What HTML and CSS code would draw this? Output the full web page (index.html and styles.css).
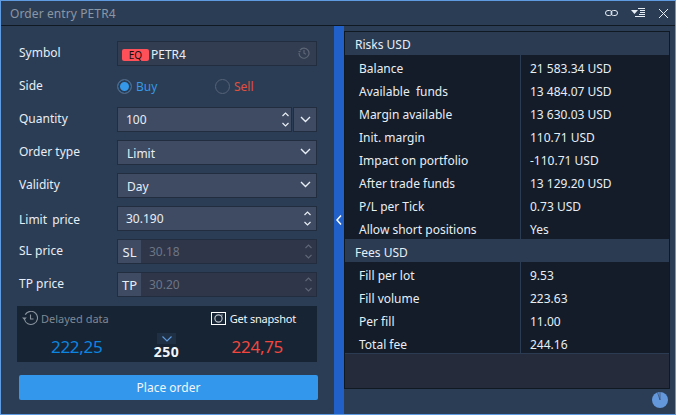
FILE: index.html
```html
<!DOCTYPE html>
<html lang="en">
<head>
    <meta charset="UTF-8">
    <title>Order entry PETR4</title>
    <link rel="stylesheet" href="styles.css">
</head>
<body>
<div class="window">
    <!-- Title bar -->
    <div class="titlebar">
        <span class="title">Order entry PETR4</span>
        <div class="titleIcons">
            <svg width="13" height="8" viewBox="0 0 13 8" fill="none" stroke="#e8eef5" stroke-width="1"><rect x="0.5" y="1.5" width="6.5" height="5" rx="2.5"/><rect x="6" y="1.5" width="6.5" height="5" rx="2.5"/></svg>
            <svg width="14" height="10" viewBox="0 0 14 10" fill="#e8eef5"><path d="M0 2h7L3.5 6z"/><rect x="7" y="0" width="7" height="1"/><rect x="9" y="2" width="5" height="1"/><rect x="9" y="4" width="5" height="1"/><rect x="8" y="6" width="6" height="1"/><rect x="4" y="8" width="10" height="1"/></svg>
            <svg width="11" height="11" viewBox="0 0 11 11" stroke="#e8eef5" stroke-width="1"><path d="M1 1l9 9M10 1l-9 9"/></svg>
        </div>
    </div>

    <div class="content">
        <!-- Order form -->
        <div class="orderForm">
            <div class="formRow">
                <label>Symbol</label>
                <div class="field symbolField">
                    <span class="eqBadge">EQ</span>
                    <span class="symbolName">PETR4</span>
                    <svg class="historyIcon" width="12" height="12" viewBox="0 0 12 12" fill="none" stroke="#5d6675" stroke-width="1.2"><path d="M2 3.2A5 5 0 1 1 1 6"/><path d="M6 3v3.2l2 1"/><path d="M0 4l1.6 1.6L3 4z" fill="#5d6675" stroke="none"/></svg>
                </div>
            </div>
            <div class="formRow">
                <label>Side</label>
                <div class="sideOptions">
                    <div class="radioOption">
                        <span class="radio radioChecked"></span><span class="buyText">Buy</span>
                    </div>
                    <div class="radioOption">
                        <span class="radio"></span><span class="sellText">Sell</span>
                    </div>
                </div>
            </div>
            <div class="formRow">
                <label>Quantity</label>
                <div class="fieldGroup">
                    <div class="field inputField qtyField">
                        <span class="value">100</span>
                        <svg class="spinner" width="7" height="15" viewBox="0 0 7 15" fill="none" stroke="#e8eef5" stroke-width="1.2"><path d="M0.5 4l3-3 3 3M0.5 11l3 3 3-3"/></svg>
                    </div>
                    <div class="field qtyDrop">
                        <svg width="11" height="7" viewBox="0 0 11 7" fill="none" stroke="#e8eef5" stroke-width="1.4"><path d="M1 1l4.5 4.5L10 1"/></svg>
                    </div>
                </div>
            </div>
            <div class="formRow">
                <label>Order type</label>
                <div class="field inputField">
                    <span class="value selectValue">Limit</span>
                    <svg class="chevron" width="11" height="7" viewBox="0 0 11 7" fill="none" stroke="#e8eef5" stroke-width="1.4"><path d="M1 1l4.5 4.5L10 1"/></svg>
                </div>
            </div>
            <div class="formRow">
                <label>Validity</label>
                <div class="field inputField">
                    <span class="value selectValue">Day</span>
                    <svg class="chevron" width="11" height="7" viewBox="0 0 11 7" fill="none" stroke="#e8eef5" stroke-width="1.4"><path d="M1 1l4.5 4.5L10 1"/></svg>
                </div>
            </div>
            <div class="formRow">
                <label class="limitLabel">Limit price</label>
                <div class="field inputField">
                    <span class="value">30.190</span>
                    <svg class="spinner" width="7" height="15" viewBox="0 0 7 15" fill="none" stroke="#e8eef5" stroke-width="1.2"><path d="M0.5 4l3-3 3 3M0.5 11l3 3 3-3"/></svg>
                </div>
            </div>
            <div class="formRow">
                <label>SL price</label>
                <div class="field disabledField">
                    <span class="prefix">SL</span>
                    <span class="value mutedValue">30.18</span>
                    <svg class="spinner" width="7" height="15" viewBox="0 0 7 15" fill="none" stroke="#5d6675" stroke-width="1.2"><path d="M0.5 4l3-3 3 3M0.5 11l3 3 3-3"/></svg>
                </div>
            </div>
            <div class="formRow">
                <label>TP price</label>
                <div class="field disabledField">
                    <span class="prefix">TP</span>
                    <span class="value mutedValue">30.20</span>
                    <svg class="spinner" width="7" height="15" viewBox="0 0 7 15" fill="none" stroke="#5d6675" stroke-width="1.2"><path d="M0.5 4l3-3 3 3M0.5 11l3 3 3-3"/></svg>
                </div>
            </div>

            <!-- Quote panel -->
            <div class="quotePanel">
                <div class="quoteTop">
                    <div class="delayed">
                        <svg width="16" height="15" viewBox="0 0 16 15" fill="none" stroke="#8a939e" stroke-width="1.1"><path d="M3.2 3.6A6.6 6.6 0 1 1 2.4 8"/><path d="M8.5 3.5v4.5h3"/><path d="M0 6.5l2.4 2.4 2.4-2.4z" fill="#8a939e" stroke="none"/></svg>
                        <span>Delayed data</span>
                    </div>
                    <div class="snapshot">
                        <svg width="15" height="13" viewBox="0 0 15 13" fill="none"><rect x="0.5" y="0.5" width="14" height="12" stroke="#fff"/><circle cx="7.5" cy="6.5" r="3.6" stroke="#b9c0c8" stroke-width="1.2"/><path d="M11 2.5v1" stroke="#fff"/></svg>
                        <span>Get snapshot</span>
                    </div>
                </div>
                <div class="quoteBottom">
                    <span class="bid">222,25</span>
                    <div class="spread">
                        <span class="spreadToggle">
                            <svg width="10" height="6" viewBox="0 0 10 6" fill="none" stroke="#5f9be0" stroke-width="1.1"><path d="M0.5 0.5L5 5l4.5-4.5"/></svg>
                        </span>
                        <span class="spreadValue">250</span>
                    </div>
                    <span class="ask">224,75</span>
                </div>
            </div>

            <button class="placeOrder" type="button">Place order</button>
        </div>

        <!-- Splitter -->
        <div class="splitter">
            <svg width="6" height="10" viewBox="0 0 6 10" fill="none" stroke="#fff" stroke-width="1.5"><path d="M5 0.5L1 5l4 4.5"/></svg>
        </div>

        <!-- Risks and fees -->
        <div class="sidePane">
            <div class="infoBox">
                <div class="infoHeader">Risks USD</div>
                <div class="infoRow"><span class="infoName">Balance</span><span class="infoValue">21 583.34 USD</span></div>
                <div class="infoRow"><span class="infoName">Available&nbsp; funds</span><span class="infoValue">13 484.07 USD</span></div>
                <div class="infoRow"><span class="infoName">Margin available</span><span class="infoValue">13 630.03 USD</span></div>
                <div class="infoRow"><span class="infoName">Init. margin</span><span class="infoValue">110.71 USD</span></div>
                <div class="infoRow"><span class="infoName">Impact on portfolio</span><span class="infoValue">-110.71 USD</span></div>
                <div class="infoRow"><span class="infoName">After trade funds</span><span class="infoValue">13 129.20 USD</span></div>
                <div class="infoRow"><span class="infoName">P/L per Tick</span><span class="infoValue">0.73 USD</span></div>
                <div class="infoRow"><span class="infoName">Allow short positions</span><span class="infoValue">Yes</span></div>
                <div class="infoHeader feesHeader">Fees USD</div>
                <div class="infoRow"><span class="infoName">Fill per lot</span><span class="infoValue">9.53</span></div>
                <div class="infoRow"><span class="infoName">Fill volume</span><span class="infoValue">223.63</span></div>
                <div class="infoRow"><span class="infoName">Per fill</span><span class="infoValue">11.00</span></div>
                <div class="infoRow"><span class="infoName">Total fee</span><span class="infoValue">244.16</span></div>
                <div class="infoFooter"></div>
            </div>
            <div class="statusBar">
                <svg width="16" height="16" viewBox="0 0 16 16"><circle cx="8" cy="8" r="8" fill="#6398dc"/><path d="M8 8V0" stroke="#2b3d55" stroke-width="0.6"/><path d="M8 8L5.5 0.4" stroke="#2b3d55" stroke-width="0.6"/></svg>
            </div>
        </div>
    </div>
</div>
</body>
</html>
```

FILE: styles.css
```css
* {
    box-sizing: border-box;
}

body {
    margin: 0;
    font-family: "Noto Sans", sans-serif;
    font-size: 12px;
    color: #e8eef5;
    background-color: #2b3d55;
}

.window {
    width: 676px;
    height: 415px;
    border: 1px solid #5f9be0;
    display: flex;
    flex-direction: column;
    background-color: #2b3d55;
    overflow: hidden;
}

/* Title bar */
.titlebar {
    height: 25px;
    flex-shrink: 0;
    display: flex;
    align-items: center;
    justify-content: space-between;
    padding: 0 6px 0 9px;
    border-bottom: 1px solid #101822;
}

.title {
    color: #8c96a3;
    font-size: 12px;
    letter-spacing: 0.1px;
}

.titleIcons {
    display: flex;
    align-items: center;
    gap: 13px;
}

.content {
    flex: 1;
    display: flex;
    min-height: 0;
}

/* Order form */
.orderForm {
    width: 333px;
    flex-shrink: 0;
    padding: 15px 17px 0 18px;
    display: flex;
    flex-direction: column;
}

.formRow {
    height: 25px;
    margin-bottom: 8px;
    display: flex;
    align-items: center;
}

.formRow label {
    width: 98px;
    flex-shrink: 0;
    color: #e8eef5;
    margin-top: -2px;
}

.formRow .limitLabel {
    margin-top: 2px;
    word-spacing: 2px;
}

.field {
    flex: 1;
    height: 25px;
    display: flex;
    align-items: center;
    border: 1px solid #222e40;
}

.inputField {
    background-color: #3f4b63;
    padding: 0 5px 0 8px;
    justify-content: space-between;
}

.qtyField {
    padding-right: 2px;
}

.symbolField {
    background-color: #323d52;
    padding: 2px 3px 0 4px;
}

.eqBadge {
    width: 27px;
    height: 12px;
    line-height: 12px;
    text-align: center;
    font-size: 10px;
    color: #111;
    background-color: #fd5059;
    border-radius: 2px;
}

.symbolName {
    margin-left: 2px;
}

.historyIcon {
    margin-left: auto;
    margin-right: 3px;
    margin-top: -4px;
}

.value {
    font-size: 12px;
}

.selectValue {
    margin-left: 1px;
    padding-top: 2px;
}

.chevron {
    margin-top: -3px;
}

.sideOptions {
    display: flex;
}

.radioOption {
    width: 98px;
    display: flex;
    align-items: center;
    gap: 4px;
}

.radio {
    width: 15px;
    height: 15px;
    border-radius: 50%;
    border: 1px solid #566378;
    display: inline-block;
}

.radioChecked {
    background-color: #3598e8;
    box-shadow: inset 0 0 0 2px #2b3d55;
}

.buyText {
    color: #3598e8;
}

.sellText {
    color: #e0503f;
}

.fieldGroup {
    flex: 1;
    display: flex;
    gap: 1px;
}

.qtyDrop {
    flex: 0 0 24px;
    justify-content: center;
    background-color: #3f4b63;
}

.disabledField {
    background-color: #2f3649;
    padding-right: 4px;
}

.prefix {
    width: 23px;
    height: 23px;
    line-height: 25px;
    font-size: 13px;
    text-align: center;
    background-color: #3f4b63;
    flex-shrink: 0;
}

.mutedValue {
    margin-left: 8px;
    color: #6d7585;
}

.disabledField .spinner {
    margin-left: auto;
}

/* Quote panel */
.quotePanel {
    margin-top: 1px;
    height: 56px;
    margin-left: -2px;
    background-color: #162433;
    padding: 4px 21px 0 5px;
    display: flex;
    flex-direction: column;
}

.quoteTop {
    display: flex;
    justify-content: space-between;
    align-items: center;
    height: 17px;
}

.delayed {
    display: flex;
    align-items: center;
    gap: 3px;
    color: #7f8893;
    font-size: 11px;
    line-height: 15px;
}

.snapshot {
    display: flex;
    align-items: center;
    gap: 4px;
    color: #f2f5f8;
    font-size: 11px;
    letter-spacing: -0.2px;
}

.quoteBottom {
    display: flex;
    justify-content: space-between;
    align-items: flex-end;
    margin-top: 6px;
    padding: 0 13px 0 29px;
}

.bid,
.ask {
    font-size: 17px;
    line-height: 24px;
    letter-spacing: -0.3px;
    padding-bottom: 1px;
}

.bid {
    color: #0c85e0;
}

.ask {
    color: #f2473f;
}

.spread {
    display: flex;
    flex-direction: column;
    align-items: center;
    margin-left: -1px;
}

.spreadToggle {
    width: 19px;
    height: 11px;
    background-color: #1f3044;
    display: flex;
    align-items: center;
    justify-content: center;
}

.spreadValue {
    font-size: 14px;
    font-weight: 700;
    line-height: 16px;
    letter-spacing: 0.5px;
    color: #f2f5f8;
}

.placeOrder {
    margin-top: 13px;
    height: 25px;
    border: none;
    border-radius: 2px;
    background-color: #3398ec;
    color: #f2f5f8;
    font-family: inherit;
    font-size: 12px;
    width: 299px;
}

/* Splitter */
.splitter {
    width: 10px;
    flex-shrink: 0;
    background-color: #2060c8;
    display: flex;
    align-items: center;
    justify-content: center;
}

/* Risks and fees */
.sidePane {
    flex: 1;
    display: flex;
    flex-direction: column;
    padding: 5px 5px 0 0;
}

.infoBox {
    height: 358px;
    border: 1px solid #101822;
    background-color: #131c28;
    display: flex;
    flex-direction: column;
}

.infoHeader {
    height: 23px;
    line-height: 26px;
    padding-left: 10px;
    background-color: #2a3b52;
    flex-shrink: 0;
}

.feesHeader {
    line-height: 28px;
}

.infoRow {
    height: 23px;
    flex-shrink: 0;
    display: flex;
    line-height: 27px;
}

.infoName {
    width: 176px;
    padding-left: 14px;
    border-right: 1px solid #2a3b52;
}

.infoValue {
    padding-left: 9px;
}

.infoFooter {
    flex: 1;
    margin-top: -1px;
    background-color: #262b3b;
    border-top: 1px solid #2a3b52;
}

.statusBar {
    flex: 1;
    display: flex;
    justify-content: flex-end;
    align-items: center;
    padding: 0 2px 3px 0;
}
```
